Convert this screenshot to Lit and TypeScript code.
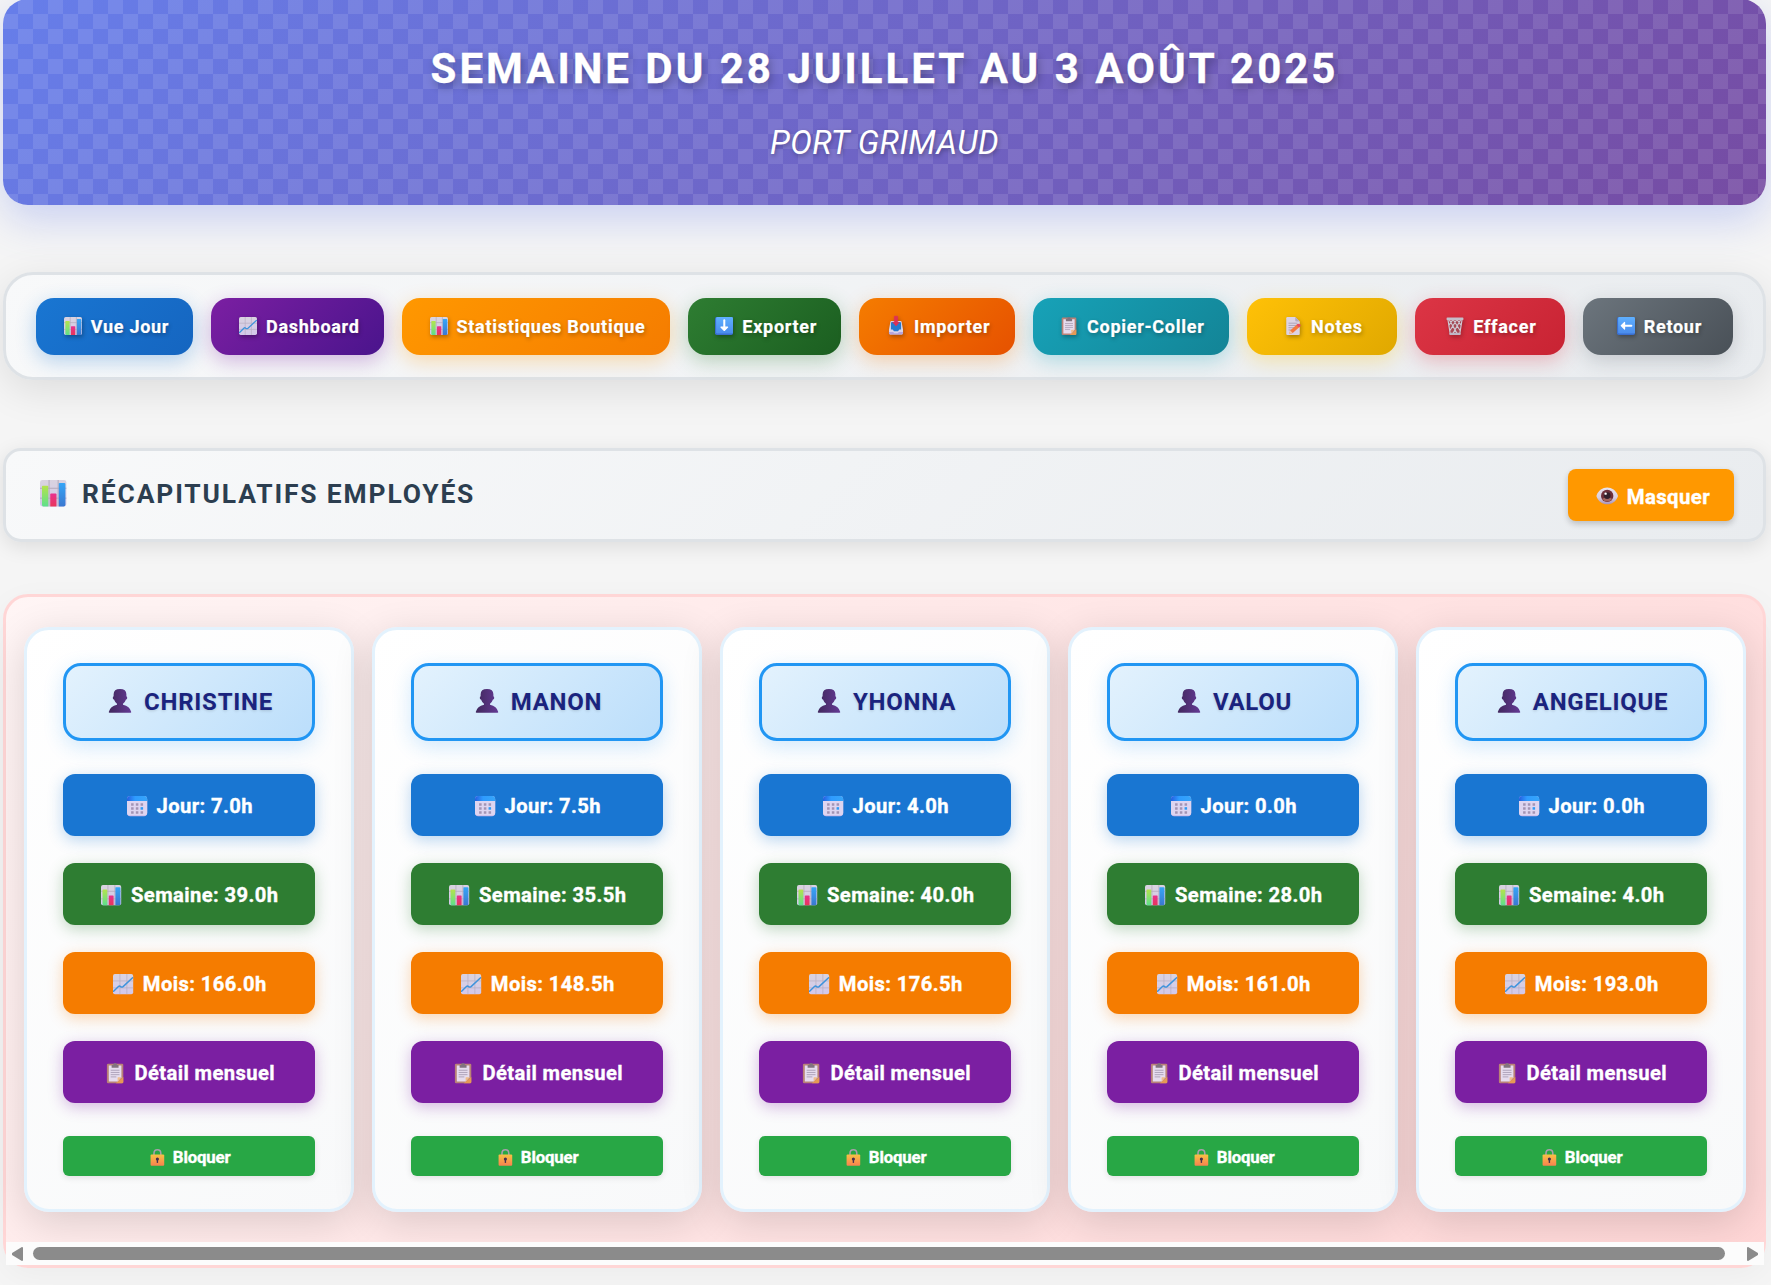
import { LitElement, html, css, svg, TemplateResult, SVGTemplateResult } from "lit";
import { customElement, property } from "lit/decorators.js";

type IconName =
  | "bars" | "trend" | "down" | "inbox" | "clipboard" | "memo"
  | "trash" | "left" | "eye" | "person" | "calendar" | "lock";

const paper = svg`<linearGradient id="paper" x1="0" y1="0" x2="0" y2="1"><stop offset="0" stop-color="#d9d3e0"/><stop offset="1" stop-color="#d3c8ea"/></linearGradient>`;
const sky = svg`<linearGradient id="sky" x1="0" y1="0" x2="0" y2="1"><stop offset="0" stop-color="#5fb0ff"/><stop offset="1" stop-color="#4a8cec"/></linearGradient>`;

const ICONS: Record<IconName, SVGTemplateResult> = {
  bars: svg`<defs>${paper}
    <linearGradient id="g1" x1="0" y1="0" x2="0" y2="1"><stop offset="0" stop-color="#b4e34c"/><stop offset="1" stop-color="#5ee08c"/></linearGradient>
    <linearGradient id="g2" x1="0" y1="0" x2="0" y2="1"><stop offset="0" stop-color="#e8308f"/><stop offset="1" stop-color="#e8365a"/></linearGradient>
    <linearGradient id="g3" x1="0" y1="0" x2="0" y2="1"><stop offset="0" stop-color="#36a6f7"/><stop offset="1" stop-color="#3b78d0"/></linearGradient></defs>
    <rect width="32" height="32" rx="3" fill="url(#paper)"/>
    <path d="M0 10H32M0 22H32M11 0V32M22 0V32" stroke="#b3a9ba" stroke-width="1.2"/>
    <path d="M2.400 8Q2.400 7 3.400 7H9Q10 7 10 8V32H4Q2.400 32 2.400 30Z" fill="url(#g1)"/>
    <path d="M12.400 17.500Q12.400 16.500 13.400 16.500H19Q20 16.500 20 17.500V32H12.400Z" fill="url(#g2)"/>
    <path d="M22.800 4.500Q22.800 3.500 23.800 3.500H29.500Q30.800 3.500 30.800 4.800V30Q30.800 32 28.800 32H22.800Z" fill="url(#g3)"/>`,
  trend: svg`<defs>${paper}</defs>
    <rect width="32" height="32" rx="3" fill="url(#paper)"/>
    <path d="M0 11H32M0 22H32M11 0V32M22 0V32" stroke="#b8afc2" stroke-width="1.200"/>
    <path d="M1 27.500L9 19.500Q10.500 18.500 12 20Q14 21.500 16 20L31 6" fill="none" stroke="#3d93dc" stroke-width="2.300" stroke-linecap="round"/>`,
  down: svg`<defs>${sky}</defs>
    <rect width="32" height="32" rx="3" fill="#3a6fd0"/><rect x="2" width="30" height="29.500" rx="2.500" fill="url(#sky)"/>
    <path d="M16.500 6V20" fill="none" stroke="#fff" stroke-width="3.600" stroke-linecap="round"/><path d="M10.500 18H22.500L16.500 24Z" fill="#fff" stroke="#fff" stroke-width="2" stroke-linejoin="round"/>`,
  left: svg`<defs>${sky}</defs>
    <rect width="32" height="32" rx="3" fill="#3a6fd0"/><rect x="2" width="30" height="29.500" rx="2.500" fill="url(#sky)"/>
    <path d="M25.500 15.500H11" stroke="#fff" stroke-width="3.600" stroke-linecap="round"/><path d="M13.500 9.500V21.500L7.500 15.500Z" fill="#fff" stroke="#fff" stroke-width="2" stroke-linejoin="round"/>`,
  inbox: svg`<path d="M6 9Q6 7 8 7H24Q26 7 26 9L28.500 22V29Q28.500 31 26.500 31H5.500Q3.500 31 3.500 29V22Z" fill="#d9d3ea"/>
    <path d="M7 11Q7 9 9 9H23Q25 9 25 11V22H22L19.500 25.500H12.500L10 22H7Z" fill="#2679cf"/>
    <path d="M3.500 26.500H11L13 29H19L21 26.500H28.500V29Q28.500 31 26.500 31H5.500Q3.500 31 3.500 29Z" fill="#b7a4dc"/>
    <path d="M13 -1.500H19V9.500H22L16 16L10 9.500H13Z" fill="#dd3157" stroke="#dd3157" stroke-width="1" stroke-linejoin="round"/>`,
  clipboard: svg`<rect x="3" y="1" width="26" height="31" rx="2" fill="#b98277"/>
    <path d="M29 22V30Q29 32 27 32H17Z" fill="#e59a55"/>
    <path d="M6 4H26V22.500L20 29.500H6Z" fill="#e6dcee"/><path d="M26 22.500H21Q20 22.500 20 23.500V29.500Z" fill="#f1bd8b"/>
    <path d="M9 11.500H23M9 15H23M9 18.500H23M9 22H18" stroke="#aca1b8" stroke-width="1.500"/>
    <path d="M10.500 3H13Q13 0 16 0Q19 0 19 3H21.500V7.500H10.500Z" fill="#81737f"/>`,
  memo: svg`<path d="M4 2Q4 0 6 0H20L28 8V30Q28 32 26 32H6Q4 32 4 30Z" fill="#dcd3e4"/>
    <path d="M20 0L28 8H22Q20 8 20 6Z" fill="#b5a9c0"/>
    <path d="M8 11H24M8 15H24M8 19H20M8 23H15" stroke="#a69bb0" stroke-width="1.500"/>
    <path d="M9 30L11 24L24 12.500L28.500 17L15.500 28.500Z" fill="#f4793d"/>
    <path d="M22 14.300L24 12.500Q26.500 11 28.500 13Q30.500 15 28.500 17L26.800 18.600Z" fill="#e84a64"/>
    <path d="M9 30L11 24L15.500 28.500Z" fill="#f5c6a2"/>`,
  trash: svg`<path d="M3 5L7.500 30H24.500L29 5Z" fill="#9d8996" fill-opacity=".35"/>
    <path d="M3.500 5L7.500 30M28.500 5L24.500 30M6 5L20 30M13 5L25 24M20 5L27 15M26 5L12 30M19 5L7 24M12 5L5 15" fill="none" stroke="#cfc9d3" stroke-width="2"/>
    <rect x="1" y="1" width="30" height="4.500" rx="1.500" fill="#c5bec9"/><rect x="6" y="28" width="20" height="4" rx="1.500" fill="#bfb6c5"/>`,
  eye: svg`<defs><linearGradient id="ew" x1="0" y1="0" x2="0" y2="1"><stop offset="0" stop-color="#e9e3ee"/><stop offset=".6" stop-color="#d9cfe0"/><stop offset="1" stop-color="#a893bb"/></linearGradient></defs>
    <path d="M-1 15.500C2 7 9 2.500 16 2.500S30 7 33 15.500C30 24.500 23 28.500 16 28.500S2 24.500-1 15.500Z" fill="url(#ew)"/>
    <circle cx="16" cy="15.500" r="9.700" fill="#6d2f3a"/><path d="M8.200 20.500A9.700 9.700 0 0 0 23.800 20.500Q16 14 8.200 20.500Z" fill="#a5675f"/>
    <circle cx="16" cy="15" r="5.300" fill="#33202c"/><circle cx="13.500" cy="12" r="1.900" fill="#fff"/>`,
  person: svg`<defs><linearGradient id="pp" x1="0" y1="0" x2="1" y2="0"><stop offset="0" stop-color="#41285d"/><stop offset="1" stop-color="#643a94"/></linearGradient></defs>
    <path d="M7.500 7Q7.500 0 16 0T24.500 7V9.500Q26 10 25.500 12.500Q25.300 14 24 14Q22.800 17.500 20 19.500V21Q29 23 31 30.500Q31 31.500 30 31.500H2Q1 31.500 1 30.500Q3 23 12 21V19.500Q9.200 17.500 8 14Q6.700 14 6.500 12.500Q6 10 7.500 9.500Z" fill="url(#pp)"/>`,
  calendar: svg`<defs><linearGradient id="ct" x1="0" y1="0" x2="1" y2="0"><stop offset="0" stop-color="#245fe0"/><stop offset=".4" stop-color="#2e9bff"/><stop offset="1" stop-color="#36a5fa"/></linearGradient></defs>
    <rect width="32" height="32" rx="5" fill="#c9b8ea"/><path d="M0 7H32V26Q32 30.500 27.500 30.500H4.500Q0 30.500 0 26Z" fill="#ded5f0"/>
    <path d="M0 8V5Q0 0 5 0H27Q32 0 32 5V8Z" fill="url(#ct)"/>
    <path d="M6.500 11.500h4v4h-4zM14 11.500h4v4h-4zM21.500 11.500h4v4h-4zM6.500 17.700h4v4h-4zM14 17.700h4v4h-4zM6.500 24h4v4h-4zM14 24h4v4h-4zM21.500 24h4v4h-4z" fill="#a294b4"/>
    <path d="M21.500 17.700h4v4h-4z" fill="#2f9bf5"/>`,
  lock: svg`<defs><linearGradient id="lk" x1="0" y1="0" x2="0" y2="1"><stop offset="0" stop-color="#f7c244"/><stop offset="1" stop-color="#f9814f"/></linearGradient></defs>
    <path d="M9.500 13V8.500Q9.500 1.500 16 1.500T22.500 8.500V13" fill="none" stroke="#a99fac" stroke-width="3"/>
    <rect x="3" y="10.500" width="26" height="21.500" rx="2" fill="url(#lk)"/>
    <circle cx="16" cy="19" r="3" fill="#45304e"/><path d="M14.700 20H17.300V26.500H14.700Z" fill="#45304e"/>`,
};

const icon = (name: IconName): TemplateResult =>
  html`<span class="icon"><svg viewBox="0 0 32 32" aria-hidden="true">${ICONS[name]}</svg></span>`;

const iconStyles = css`
  .icon {
    display: inline-flex;
    justify-content: center;
    width: 1.37em;
    height: 1em;
    margin-right: 0.02em;
    vertical-align: -0.14em;
  }
  .icon svg {
    width: 1em;
    height: 1em;
    overflow: visible;
    stroke-width: 0;
  }
`;

interface Employee {
  name: string;
  day: string;
  week: string;
  month: string;
}

@customElement("employee-card")
class EmployeeCard extends LitElement {
  @property({ attribute: false }) employee!: Employee;

  static styles = [
    iconStyles,
    css`
      :host {
        box-sizing: border-box;
        flex: 0 0 330px;
        height: 585px;
        display: flex;
        flex-direction: column;
        padding: 33px 36px;
        border: 3px solid #e3f2fd;
        border-radius: 25px;
        background: linear-gradient(145deg, #ffffff 0%, #f8f9fa 100%);
        box-shadow: 0 10px 40px rgba(0, 0, 0, 0.14);
        font-weight: 700;
      }
      .name,
      .row,
      .lock {
        box-sizing: border-box;
        display: flex;
        align-items: center;
        justify-content: center;
        white-space: pre;
      }
      .name {
        height: 78px;
        margin-bottom: 33px;
        padding-right: 1px;
        border: 3px solid #2196f3;
        border-radius: 18px;
        background: linear-gradient(135deg, #e3f2fd 0%, #bbdefb 100%);
        box-shadow: 0 6px 20px rgba(33, 150, 243, 0.2);
        color: #1a237e;
        font-size: 24px;
        letter-spacing: 0.75px;
        text-shadow: 0 1px 3px rgba(0, 0, 0, 0.15);
      }
      .row {
        height: 62px;
        margin-bottom: 27px;
        padding: 2px 2px 0 0;
        border-radius: 12px;
        color: #fff;
        font-size: 20.200px;
        letter-spacing: 0.4px;
        -webkit-text-stroke: 0.35px currentColor;
      }
      .row:nth-last-child(2) {
        margin-bottom: 33px;
      }
      .day { background: #1976d2; box-shadow: 0 4px 15px rgba(25, 118, 210, 0.3); }
      .week { background: #2e7d32; box-shadow: 0 4px 15px rgba(46, 125, 50, 0.3); }
      .month { background: #f57c00; box-shadow: 0 4px 15px rgba(245, 124, 0, 0.3); }
      .detail { background: #7b1fa2; box-shadow: 0 4px 15px rgba(123, 31, 162, 0.3); }
      .lock {
        height: 40px;
        padding: 2px 2px 0 0;
        border-radius: 6px;
        background: #28a745;
        box-shadow: 0 2px 6px rgba(0, 0, 0, 0.1);
        color: #fff;
        font-size: 16.800px;
        letter-spacing: -0.15px;
        -webkit-text-stroke: 0.35px currentColor;
      }
    `,
  ];

  render() {
    const e = this.employee;
    return html`
      <div class="name"><span>${icon("person")} ${e.name}</span></div>
      <div class="row day"><span>${icon("calendar")} Jour: ${e.day}</span></div>
      <div class="row week"><span>${icon("bars")} Semaine: ${e.week}</span></div>
      <div class="row month"><span>${icon("trend")} Mois: ${e.month}</span></div>
      <div class="row detail"><span>${icon("clipboard")} Détail mensuel</span></div>
      <div class="lock"><span>${icon("lock")} Bloquer</span></div>
    `;
  }
}

const ACTIONS: { label: string; icon: IconName; tone: string }[] = [
  { label: "Vue Jour", icon: "bars", tone: "blue" },
  { label: "Dashboard", icon: "trend", tone: "purple" },
  { label: "Statistiques Boutique", icon: "bars", tone: "orange" },
  { label: "Exporter", icon: "down", tone: "green" },
  { label: "Importer", icon: "inbox", tone: "ember" },
  { label: "Copier-Coller", icon: "clipboard", tone: "teal" },
  { label: "Notes", icon: "memo", tone: "yellow" },
  { label: "Effacer", icon: "trash", tone: "red" },
  { label: "Retour", icon: "left", tone: "grey" },
];

const EMPLOYEES: Employee[] = [
  { name: "CHRISTINE", day: "7.0h", week: "39.0h", month: "166.0h" },
  { name: "MANON", day: "7.5h", week: "35.5h", month: "148.5h" },
  { name: "YHONNA", day: "4.0h", week: "40.0h", month: "176.5h" },
  { name: "VALOU", day: "0.0h", week: "28.0h", month: "161.0h" },
  { name: "ANGELIQUE", day: "0.0h", week: "4.0h", month: "193.0h" },
];

@customElement("app-root")
class AppRoot extends LitElement {
  static styles = [
    iconStyles,
    css`
      :host {
        box-sizing: border-box;
        display: flex;
        flex-direction: column;
        width: 1771px;
        height: 1285px;
        padding: 0 5px 0 3px;
        overflow: hidden;
        background: #f5f5f5;
        font-family: Roboto, "Liberation Sans", sans-serif;
      }
      * {
        box-sizing: border-box;
      }
      .banner {
        flex: none;
        height: 206px;
        margin-top: -1px;
        padding-top: 45px;
        border-radius: 25px;
        background:
          repeating-conic-gradient(rgba(255, 255, 255, 0.1) 0 25%, transparent 0 50%) 0 0 / 30px 30px,
          linear-gradient(135deg, #667eea 0%, #764ba2 100%);
        box-shadow: 0 15px 40px rgba(102, 126, 234, 0.3);
        color: #fff;
        text-align: center;
      }
      h1 {
        margin: 0;
        font-size: 42px;
        line-height: 50px;
        font-weight: 700;
        letter-spacing: 3px;
        text-shadow: 2px 4px 8px rgba(0, 0, 0, 0.3);
        -webkit-text-stroke: 0.3px currentColor;
      }
      .place {
        margin: 30px 0 0;
        font-size: 32.400px;
        line-height: 38px;
        font-style: italic;
        letter-spacing: 0.45px;
        text-shadow: 1px 2px 4px rgba(0, 0, 0, 0.3);
      }
      .actions {
        flex: none;
        display: flex;
        align-items: center;
        justify-content: center;
        gap: 18px;
        height: 108px;
        margin-top: 67px;
        border: 3px solid #dee2e6;
        border-radius: 30px;
        background: linear-gradient(135deg, #f8f9fa 0%, #e9ecef 100%);
        box-shadow: 0 10px 40px rgba(0, 0, 0, 0.1);
      }
      .actions button {
        flex: none;
        min-width: 150px;
        height: 57px;
        padding: 0 24.300px;
        border: 0;
        border-radius: 18px;
        color: #fff;
        font: 700 18px Roboto, sans-serif;
        letter-spacing: 0.72px;
        white-space: nowrap;
        text-shadow: 1px 2px 4px rgba(0, 0, 0, 0.3);
        -webkit-text-stroke: 0.2px currentColor;
      }
      .actions .icon svg {
        filter: drop-shadow(1px 2px 2px rgba(0, 0, 0, 0.3));
      }
      .blue { background: linear-gradient(135deg, #1976d2, #1565c0); box-shadow: 0 6px 20px rgba(25, 118, 210, 0.3); }
      .purple { background: linear-gradient(135deg, #7b1fa2, #4a148c); box-shadow: 0 6px 20px rgba(123, 31, 162, 0.3); }
      .orange { background: linear-gradient(135deg, #ff9800, #f57c00); box-shadow: 0 6px 20px rgba(255, 152, 0, 0.3); }
      .green { background: linear-gradient(135deg, #2e7d32, #1b5e20); box-shadow: 0 6px 20px rgba(46, 125, 50, 0.3); }
      .ember { background: linear-gradient(135deg, #f57c00, #e65100); box-shadow: 0 6px 20px rgba(245, 124, 0, 0.3); }
      .teal { background: linear-gradient(135deg, #17a2b8, #138496); box-shadow: 0 6px 20px rgba(23, 162, 184, 0.3); }
      .yellow { background: linear-gradient(135deg, #ffc107, #e0a800); box-shadow: 0 6px 20px rgba(255, 193, 7, 0.3); }
      .red { background: linear-gradient(135deg, #dc3545, #c82333); box-shadow: 0 6px 20px rgba(220, 53, 69, 0.3); }
      .grey { background: linear-gradient(135deg, #6c757d, #495057); box-shadow: 0 6px 20px rgba(108, 117, 125, 0.3); }
      .recap {
        flex: none;
        display: flex;
        align-items: center;
        justify-content: space-between;
        height: 94px;
        margin-top: 68px;
        padding: 0 29px;
        border: 3px solid #dee2e6;
        border-radius: 18px;
        background: linear-gradient(135deg, #f8f9fa 0%, #e9ecef 100%);
        box-shadow: 0 5px 20px rgba(0, 0, 0, 0.1);
      }
      h2 {
        margin: 0;
        padding-bottom: 2px;
        color: #2c3e50;
        font-size: 26.400px;
        font-weight: 700;
        letter-spacing: 1.860px;
      }
      h2 .icon {
        margin-right: 2.5px;
      }
      .hide {
        width: 166px;
        height: 52px;
        padding: 3px 0 0 1px;
        border: 0;
        border-radius: 8px;
        background: #ff9800;
        box-shadow: 0 3px 6px rgba(0, 0, 0, 0.2);
        color: #fff;
        font: 700 20.400px Roboto, sans-serif;
        letter-spacing: 0.4px;
        -webkit-text-stroke: 0.35px currentColor;
      }
      .panel {
        flex: none;
        display: flex;
        flex-direction: column;
        justify-content: space-between;
        height: 674px;
        margin-top: 52px;
        border: 3px solid #ffd6d6;
        border-radius: 25px;
        background: linear-gradient(135deg, #fff5f5 0%, #ffd6d6 100%);
        box-shadow: 0 8px 32px rgba(0, 0, 0, 0.04);
      }
      .cards {
        display: flex;
        gap: 18px;
        padding: 30px 18px 0;
      }
      .scroll {
        display: flex;
        align-items: center;
        height: 23px;
        margin-right: -1px;
        padding: 0 6px;
        background: #fcfcfc;
      }
      .scroll svg {
        flex: none;
        width: 11px;
        height: 14px;
        fill: #8b8b8b;
        stroke: #8b8b8b;
        stroke-width: 2;
        stroke-linejoin: round;
      }
      .thumb {
        flex: 1;
        height: 13px;
        margin: 0 22px 0 10px;
        border-radius: 7px;
        background: #8b8b8b;
      }
    `,
  ];

  render() {
    return html`
      <header class="banner">
        <h1>SEMAINE DU 28 JUILLET AU 3 AOÛT 2025</h1>
        <p class="place">PORT GRIMAUD</p>
      </header>
      <nav class="actions">
        ${ACTIONS.map((a) => html`<button class=${a.tone}>${icon(a.icon)} ${a.label}</button>`)}
      </nav>
      <section class="recap">
        <h2>${icon("bars")} RÉCAPITULATIFS EMPLOYÉS</h2>
        <button class="hide">${icon("eye")} Masquer</button>
      </section>
      <main class="panel">
        <div class="cards">
          ${EMPLOYEES.map((e) => html`<employee-card .employee=${e}></employee-card>`)}
        </div>
        <div class="scroll">
          <svg viewBox="0 0 11 14"><path d="M10 1V13L1 7.500V6.500Z" /></svg>
          <div class="thumb"></div>
          <svg viewBox="0 0 11 14"><path d="M1 1V13L10 7.500V6.500Z" /></svg>
        </div>
      </main>
    `;
  }
}
